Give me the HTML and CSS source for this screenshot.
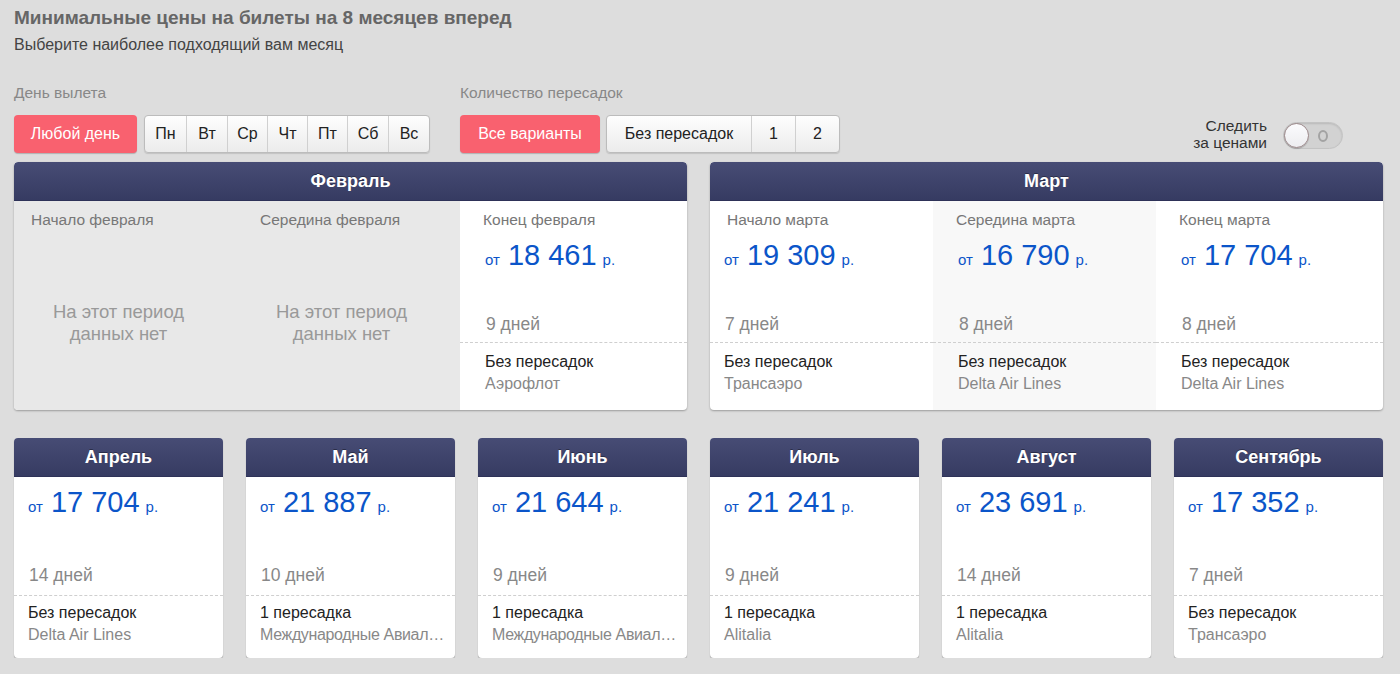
FILE: index.html
```html
<!DOCTYPE html>
<html lang="ru">
<head>
<meta charset="utf-8">
<title>Минимальные цены на билеты</title>
<link rel="stylesheet" href="styles.css">
</head>
<body>
<div class="page">
  <h1 class="title">Минимальные цены на билеты на 8 месяцев вперед</h1>
  <p class="subtitle">Выберите наиболее подходящий вам месяц</p>

  <div class="filters">
    <div class="filter">
      <div class="filter-label">День вылета</div>
      <div class="filter-row">
        <button class="btn btn-active btn-any">Любой день</button>
        <div class="seg seg-days">
          <button>Пн</button><button>Вт</button><button>Ср</button><button>Чт</button><button>Пт</button><button>Сб</button><button>Вс</button>
        </div>
      </div>
    </div>
    <div class="filter">
      <div class="filter-label">Количество пересадок</div>
      <div class="filter-row">
        <button class="btn btn-active btn-all">Все варианты</button>
        <div class="seg seg-stops">
          <button class="wide">Без пересадок</button><button class="num">1</button><button class="num">2</button>
        </div>
      </div>
    </div>
    <div class="watch">
      <div class="watch-text">Следить<br>за ценами</div>
      <div class="toggle"><span class="knob"></span><span class="off-mark"></span></div>
    </div>
  </div>

  <div class="grid">
    <section class="card card-wide">
      <header class="card-head">Февраль</header>
      <div class="periods">
        <div class="period period-empty">
          <div class="period-label">Начало февраля</div>
          <div class="no-data">На этот период<br>данных нет</div>
        </div>
        <div class="period period-empty">
          <div class="period-label">Середина февраля</div>
          <div class="no-data">На этот период<br>данных нет</div>
        </div>
        <div class="period">
          <div class="period-label">Конец февраля</div>
          <div class="price"><span class="from">от</span><span class="amount">18 461</span><span class="cur">р.</span></div>
          <div class="days">9 дней</div>
          <div class="route"><div class="stops">Без пересадок</div><div class="airline">Аэрофлот</div></div>
        </div>
      </div>
    </section>

    <section class="card card-wide">
      <header class="card-head">Март</header>
      <div class="periods">
        <div class="period">
          <div class="period-label">Начало марта</div>
          <div class="price"><span class="from">от</span><span class="amount">19 309</span><span class="cur">р.</span></div>
          <div class="days">7 дней</div>
          <div class="route"><div class="stops">Без пересадок</div><div class="airline">Трансаэро</div></div>
        </div>
        <div class="period period-hover">
          <div class="period-label">Середина марта</div>
          <div class="price"><span class="from">от</span><span class="amount">16 790</span><span class="cur">р.</span></div>
          <div class="days">8 дней</div>
          <div class="route"><div class="stops">Без пересадок</div><div class="airline">Delta Air Lines</div></div>
        </div>
        <div class="period">
          <div class="period-label">Конец марта</div>
          <div class="price"><span class="from">от</span><span class="amount">17 704</span><span class="cur">р.</span></div>
          <div class="days">8 дней</div>
          <div class="route"><div class="stops">Без пересадок</div><div class="airline">Delta Air Lines</div></div>
        </div>
      </div>
    </section>

    <section class="card card-small">
      <header class="card-head">Апрель</header>
      <div class="card-body">
        <div class="price"><span class="from">от</span><span class="amount">17 704</span><span class="cur">р.</span></div>
        <div class="days">14 дней</div>
        <div class="route"><div class="stops">Без пересадок</div><div class="airline">Delta Air Lines</div></div>
      </div>
    </section>

    <section class="card card-small">
      <header class="card-head">Май</header>
      <div class="card-body">
        <div class="price"><span class="from">от</span><span class="amount">21 887</span><span class="cur">р.</span></div>
        <div class="days">10 дней</div>
        <div class="route"><div class="stops">1 пересадка</div><div class="airline trunc" title="Международные Авиалинии Украины">Международные Авиал…</div></div>
      </div>
    </section>

    <section class="card card-small">
      <header class="card-head">Июнь</header>
      <div class="card-body">
        <div class="price"><span class="from">от</span><span class="amount">21 644</span><span class="cur">р.</span></div>
        <div class="days">9 дней</div>
        <div class="route"><div class="stops">1 пересадка</div><div class="airline trunc" title="Международные Авиалинии Украины">Международные Авиал…</div></div>
      </div>
    </section>

    <section class="card card-small">
      <header class="card-head">Июль</header>
      <div class="card-body">
        <div class="price"><span class="from">от</span><span class="amount">21 241</span><span class="cur">р.</span></div>
        <div class="days">9 дней</div>
        <div class="route"><div class="stops">1 пересадка</div><div class="airline">Alitalia</div></div>
      </div>
    </section>

    <section class="card card-small">
      <header class="card-head">Август</header>
      <div class="card-body">
        <div class="price"><span class="from">от</span><span class="amount">23 691</span><span class="cur">р.</span></div>
        <div class="days">14 дней</div>
        <div class="route"><div class="stops">1 пересадка</div><div class="airline">Alitalia</div></div>
      </div>
    </section>

    <section class="card card-small">
      <header class="card-head">Сентябрь</header>
      <div class="card-body">
        <div class="price"><span class="from">от</span><span class="amount">17 352</span><span class="cur">р.</span></div>
        <div class="days">7 дней</div>
        <div class="route"><div class="stops">Без пересадок</div><div class="airline">Трансаэро</div></div>
      </div>
    </section>
  </div>
</div>
</body>
</html>
```

FILE: styles.css
```css
* { box-sizing: border-box; }

html, body {
  margin: 0;
  padding: 0;
  background: #dddddd;
  font-family: "Liberation Sans", Arial, Helvetica, sans-serif;
  color: #333;
  overflow: hidden;
}

.page {
  padding: 7px 17px 0 14px;
}

.title {
  margin: 0;
  font-size: 19px;
  line-height: 22px;
  font-weight: bold;
  color: #666;
}

.subtitle {
  margin: 7px 0 0;
  font-size: 16px;
  line-height: 18px;
  color: #444;
}

/* ---------- filters ---------- */
.filters {
  display: flex;
  align-items: flex-end;
  gap: 30px;
  margin-top: 30px;
}

.filter-label {
  font-size: 15.5px;
  line-height: 18px;
  color: #888;
}

.filter-row {
  display: flex;
  gap: 7px;
  margin-top: 13px;
}

.filter:nth-child(2) .filter-row { gap: 6px; }

button {
  font-family: inherit;
  font-size: 16px;
  cursor: pointer;
}

.btn {
  height: 38px;
  border: 0;
  border-radius: 4px;
  padding: 0 10px;
}

.btn-active {
  background: #f9616f;
  color: #fff;
  box-shadow: 0 1px 1px rgba(0, 0, 0, 0.2);
}

.btn-any { width: 123px; }
.btn-all { width: 140px; }

.seg {
  display: flex;
  height: 38px;
  border: 1px solid #bcbcbc;
  border-radius: 4px;
  overflow: hidden;
  box-shadow: 0 1px 1px rgba(0, 0, 0, 0.12);
  background: linear-gradient(#fefefe, #ececec);
}

.seg button {
  height: 36px;
  border: 0;
  border-left: 1px solid #d0d0d0;
  background: transparent;
  color: #222;
  padding: 0;
}

.seg button:first-child { border-left: 0; }

.seg-days button { width: 40px; }
.seg-days button:first-child,
.seg-days button:nth-child(2),
.seg-days button:nth-child(6),
.seg-days button:nth-child(7) { width: 41px; }
.seg-stops .wide { width: 144px; }
.seg-stops .num { width: 44px; }

.watch {
  margin-left: auto;
  margin-right: 40px;
  height: 38px;
  display: flex;
  align-items: center;
  gap: 16px;
}

.watch-text {
  text-align: right;
  font-size: 15.5px;
  line-height: 17px;
  color: #333;
  margin-top: -1px;
}

.toggle {
  position: relative;
  width: 60px;
  height: 27px;
  margin-top: 2px;
  border-radius: 14px;
  background: #d2d2d2;
  border: 1px solid #c3c3c3;
  box-shadow: inset 0 1px 2px rgba(0, 0, 0, 0.12);
}

.knob {
  position: absolute;
  left: 0;
  top: 0;
  width: 25px;
  height: 25px;
  border-radius: 50%;
  background: linear-gradient(#fbfbfd, #ededf0);
  border: 1px solid #9d8a8c;
  box-shadow: 0 1px 1px rgba(0, 0, 0, 0.2);
}

.off-mark {
  position: absolute;
  left: 34px;
  top: 7px;
  width: 10px;
  height: 12px;
  border-radius: 50%;
  border: 2px solid #a3a3a3;
}

/* ---------- cards ---------- */
.grid {
  display: grid;
  grid-template-columns: repeat(6, 209px);
  column-gap: 23px;
  row-gap: 28px;
  margin-top: 9px;
}

.card {
  background: #fff;
  border-radius: 4px;
}

.card-wide {
  grid-column: span 3;
  box-shadow: 0 1px 2px rgba(0, 0, 0, 0.3);
  overflow: hidden;
}

.card-small {
  box-shadow:
    0 1px 1px rgba(0, 0, 0, 0.3),
    0 4px 0 -1px #f7f7f7,
    0 5px 0 -1px #c4c4c4,
    0 7px 0 -1px #f7f7f7,
    0 8px 1px -1px #bdbdbd;
}

.card-head {
  height: 39px;
  line-height: 39px;
  text-align: center;
  color: #fff;
  font-size: 18px;
  font-weight: bold;
  background: linear-gradient(#474c75, #363b62);
  border-radius: 4px 4px 0 0;
  border-bottom: 1px solid #2e3258;
  text-shadow: 0 -1px 0 rgba(0, 0, 0, 0.35);
}

.periods {
  display: grid;
  grid-template-columns: 223px 223px 1fr;
}

.period {
  --pl: 25px;
  padding-top: 10px;
  display: flex;
  flex-direction: column;
}

.period:first-child { --pl: 14px; }

.period-empty { background: #e8e8e8; }
.period-hover { background: #f8f8f8; }

.period-label {
  font-size: 15.5px;
  line-height: 18px;
  color: #777;
  padding-left: calc(var(--pl) - 2px);
  white-space: nowrap;
}

.period:first-child .period-label { padding-left: 17px; }

.no-data {
  margin-top: 72px;
  font-size: 18.5px;
  line-height: 22px;
  color: #999;
  text-align: center;
  padding-right: 14px;
}

.price {
  display: flex;
  align-items: baseline;
  height: 32px;
  line-height: 32px;
  color: #0b55c9;
  padding-left: var(--pl, 14px);
}

.period .price { margin-top: 10px; }

.from {
  font-size: 15px;
  margin-right: 8px;
}

.amount {
  font-size: 29px;
  margin-right: 6px;
}

.cur {
  font-size: 15px;
}

.days {
  font-size: 17.5px;
  line-height: 20px;
  color: #888;
  padding-left: calc(var(--pl, 14px) + 1px);
}

.period .days { margin-top: 43px; padding-bottom: 8px; }

.route {
  border-top: 1px dashed #cfcfcf;
  padding: 9px 4px 17px var(--pl, 14px);
}

.stops {
  font-size: 16px;
  line-height: 19px;
  color: #222;
}

.airline {
  margin-top: 3px;
  font-size: 16px;
  line-height: 19px;
  color: #888;
  white-space: nowrap;
}

.airline.trunc {
  letter-spacing: -0.35px;
}

.card-body {
  padding-top: 9px;
}

.card-body .days {
  margin-top: 47px;
  padding-bottom: 10px;
}

.card-body .route {
  padding-top: 7px;
  padding-bottom: 14px;
}
```
